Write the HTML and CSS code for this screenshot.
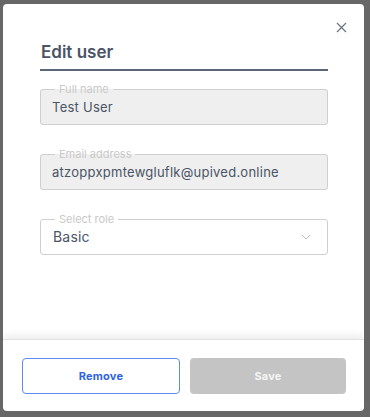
FILE: index.html
```html
<!DOCTYPE html>
<html>
<head>
	<title>Edit user</title>
	<meta charset="utf-8">
	<link rel="stylesheet" href="styles.css">
</head>
<body>
  <div class="modal">
    <button class="close-btn" aria-label="Close">
      <svg width="11" height="11" viewBox="0 0 11 11">
        <path d="M1 1L10 10M10 1L1 10" stroke="#6b7280" stroke-width="1.2" fill="none"/>
      </svg>
    </button>
    <div class="modal-body">
      <h2 class="modal-title">Edit user</h2>
      <fieldset class="field field-disabled">
        <legend>Full name</legend>
        <div class="field-value">Test User</div>
      </fieldset>
      <fieldset class="field field-disabled">
        <legend>Email address</legend>
        <div class="field-value">atzoppxpmtewgluflk@upived.online</div>
      </fieldset>
      <fieldset class="field">
        <legend>Select role</legend>
        <div class="field-value select-value">
          <span>Basic</span>
          <svg width="10" height="6" viewBox="0 0 10 6">
            <path d="M1 1L5 5L9 1" stroke="#bdbdbd" stroke-width="1" fill="none"/>
          </svg>
        </div>
      </fieldset>
    </div>
    <div class="modal-footer">
      <button class="btn btn-outline">Remove</button>
      <button class="btn btn-disabled">Save</button>
    </div>
  </div>
</body>
</html>
```

FILE: styles.css
```css
body{
	margin: 0;
	background: #676767;
	font-family: Inter, "Liberation Sans", sans-serif;
}
.modal{
	position: relative;
	display: flex;
	flex-direction: column;
	width: 361px;
	height: 407px;
	margin: 4px 0 0 3px;
	background: #fff;
	border-radius: 4px;
	overflow: hidden;
}
.close-btn{
	position: absolute;
	top: 13px;
	right: 13px;
	width: 20px;
	height: 20px;
	padding: 0;
	border: none;
	background: none;
	display: flex;
	align-items: center;
	justify-content: center;
}
.modal-body{
	flex: 1;
	padding: 0 36px 0 37px;
}
.modal-title{
	margin: 0 0 12px;
	padding: 38px 0 7px 1px;
	font-size: 17px;
	line-height: 20px;
	font-weight: 600;
	color: #4a5466;
	border-bottom: 2px solid #5b6678;
}
.field{
	margin: 0 0 23px;
	padding: 0;
	border: 1px solid #cfcfcf;
	border-radius: 3px;
	min-width: 0;
}
.field legend{
	margin-left: 14px;
	padding: 0 4px;
	font-size: 11px;
	line-height: 12px;
	color: #c9c9c9;
}
.field-disabled{
	background: #efefef;
}
.field-value{
	margin-top: -6px;
	height: 35px;
	padding: 0 11px;
	display: flex;
	align-items: center;
	font-size: 13px;
	letter-spacing: 0.25px;
	color: #4a5466;
}
.select-value{
	justify-content: space-between;
	padding: 0 16px 0 12px;
	font-size: 14px;
	letter-spacing: 0.2px;
}
.modal-footer{
	display: flex;
	gap: 10px;
	height: 72px;
	padding: 18px 18px 0 19px;
	box-sizing: border-box;
	border-top: 1px solid #e2e2e2;
	box-shadow: 0 -4px 7px rgba(0,0,0,0.07);
}
.btn{
	flex: 1;
	height: 36px;
	border-radius: 4px;
	font-family: inherit;
	font-size: 11px;
	font-weight: 700;
	letter-spacing: 0.2px;
}
.btn-outline{
	background: #fff;
	color: #2d63e3;
	border: 1px solid #5a8cf2;
}
.btn-disabled{
	background: #c4c4c4;
	color: #f4f4f4;
	border: none;
}
```
